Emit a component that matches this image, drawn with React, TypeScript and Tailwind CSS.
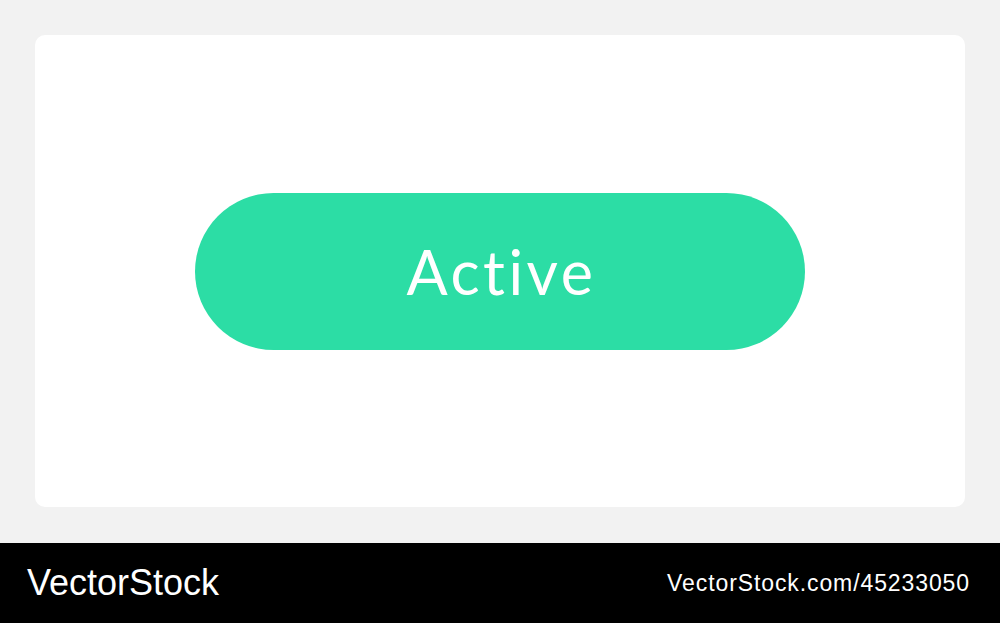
export default function App() {
  return (
    <div className="w-[1000px] h-[623px] bg-[#f2f2f2] flex flex-col" style={{ fontFamily: '"Liberation Sans", Arial, sans-serif' }}>
      <div className="h-[543px] pt-[35px] px-[35px] pb-[36px]">
        <div className="h-full bg-white rounded-[10px] flex items-center justify-center">
          <div className="w-[610px] h-[157px] rounded-full bg-[#2cdda5] flex items-center justify-center mt-[1px]">
            <span className="text-white text-[61px] leading-none tracking-[3.5px] pl-[3px]" style={{ fontFamily: 'Lato, "Open Sans", sans-serif' }}>
              Active
            </span>
          </div>
        </div>
      </div>
      <div className="flex-1 bg-black flex items-center justify-between pl-[27px] pr-[30px]">
        <span className="text-white text-[36px] leading-none">VectorStock</span>
        <span className="text-white text-[23px] leading-none tracking-[0.9px]">VectorStock.com/45233050</span>
      </div>
    </div>
  );
}
